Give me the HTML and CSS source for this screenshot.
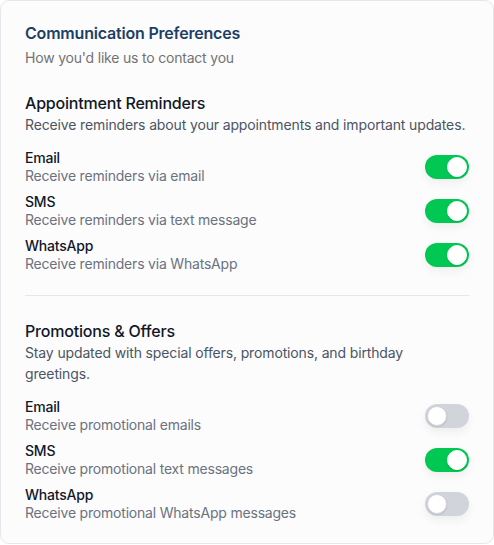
FILE: index.html
```html
<!DOCTYPE html>
<html lang="en">
<head>
<meta charset="utf-8">
<title>Communication Preferences</title>
<link rel="stylesheet" href="styles.css">
</head>
<body>
<div class="card">
  <header class="card-header">
    <h1 class="card-title">Communication Preferences</h1>
    <p class="card-subtitle">How you'd like us to contact you</p>
  </header>

  <section class="section">
    <h2 class="section-title">Appointment Reminders</h2>
    <p class="section-desc">Receive reminders about your appointments and important updates.</p>
    <ul class="options">
      <li class="option">
        <div class="option-text">
          <span class="option-label">Email</span>
          <span class="option-hint">Receive reminders via email</span>
        </div>
        <span class="toggle on"><span class="knob"></span></span>
      </li>
      <li class="option">
        <div class="option-text">
          <span class="option-label">SMS</span>
          <span class="option-hint">Receive reminders via text message</span>
        </div>
        <span class="toggle on"><span class="knob"></span></span>
      </li>
      <li class="option">
        <div class="option-text">
          <span class="option-label">WhatsApp</span>
          <span class="option-hint">Receive reminders via WhatsApp</span>
        </div>
        <span class="toggle on"><span class="knob"></span></span>
      </li>
    </ul>
  </section>

  <hr class="divider">

  <section class="section">
    <h2 class="section-title">Promotions &amp; Offers</h2>
    <p class="section-desc">Stay updated with special offers, promotions, and birthday greetings.</p>
    <ul class="options">
      <li class="option">
        <div class="option-text">
          <span class="option-label">Email</span>
          <span class="option-hint">Receive promotional emails</span>
        </div>
        <span class="toggle"><span class="knob"></span></span>
      </li>
      <li class="option">
        <div class="option-text">
          <span class="option-label">SMS</span>
          <span class="option-hint">Receive promotional text messages</span>
        </div>
        <span class="toggle on"><span class="knob"></span></span>
      </li>
      <li class="option">
        <div class="option-text">
          <span class="option-label">WhatsApp</span>
          <span class="option-hint">Receive promotional WhatsApp messages</span>
        </div>
        <span class="toggle"><span class="knob"></span></span>
      </li>
    </ul>
  </section>
</div>
</body>
</html>
```
FILE: styles.css
```css
* { box-sizing: border-box; }

html, body {
  margin: 0;
  padding: 0;
  background: #ffffff;
}

body {
  font-family: Inter, "Noto Sans", "Liberation Sans", sans-serif;
  color: #111827;
}

.card {
  width: 494px;
  height: 544px;
  border: 1px solid #e5e7eb;
  border-radius: 9px;
  background: #fcfcfd;
  padding: 20px 24px;
  display: flex;
  flex-direction: column;
}

.card-title {
  margin: 0;
  font-size: 16px;
  line-height: 24px;
  font-weight: 600;
  letter-spacing: -0.2px;
  color: #1e3f66;
}

.card-subtitle {
  margin: 2px 0 0;
  font-size: 14px;
  line-height: 21px;
  letter-spacing: -0.2px;
  color: #737373;
}

.section {
  margin-top: 24px;
}

.section-title {
  margin: 0;
  font-size: 16px;
  line-height: 22px;
  font-weight: 450;
  letter-spacing: -0.2px;
  color: #111827;
}

.section-desc {
  margin: 0;
  font-size: 14px;
  line-height: 21px;
  letter-spacing: -0.14px;
  color: #4b5563;
}

.options {
  list-style: none;
  margin: 14px 0 0;
  padding: 0;
  display: flex;
  flex-direction: column;
  gap: 8px;
}

.option {
  display: flex;
  align-items: center;
  justify-content: space-between;
}

.option-text {
  display: flex;
  flex-direction: column;
}

.option-label {
  font-size: 14px;
  line-height: 18px;
  font-weight: 450;
  letter-spacing: -0.2px;
  color: #111827;
}

.option-hint {
  font-size: 14px;
  line-height: 18px;
  letter-spacing: -0.2px;
  color: #6b7280;
}

.divider {
  margin: 22px 0 0;
  border: 0;
  border-top: 1px solid #e5e7eb;
  height: 0;
}

.divider + .section {
  margin-top: 24px;
}

.toggle {
  position: relative;
  flex: none;
  width: 44px;
  height: 24px;
  border-radius: 12px;
  background: #d1d5db;
  box-shadow: 0 4px 10px rgba(0, 0, 0, 0.06);
}

.toggle.on {
  background: #00c853;
}

.knob {
  position: absolute;
  top: 2px;
  left: 2px;
  width: 20px;
  height: 20px;
  border-radius: 50%;
  background: #ffffff;
  border: 1px solid #d1d5db;
  box-shadow: 0 1px 2px rgba(0, 0, 0, 0.12);
}

.toggle.on .knob {
  left: 22px;
  border-color: #ffffff;
}
```
